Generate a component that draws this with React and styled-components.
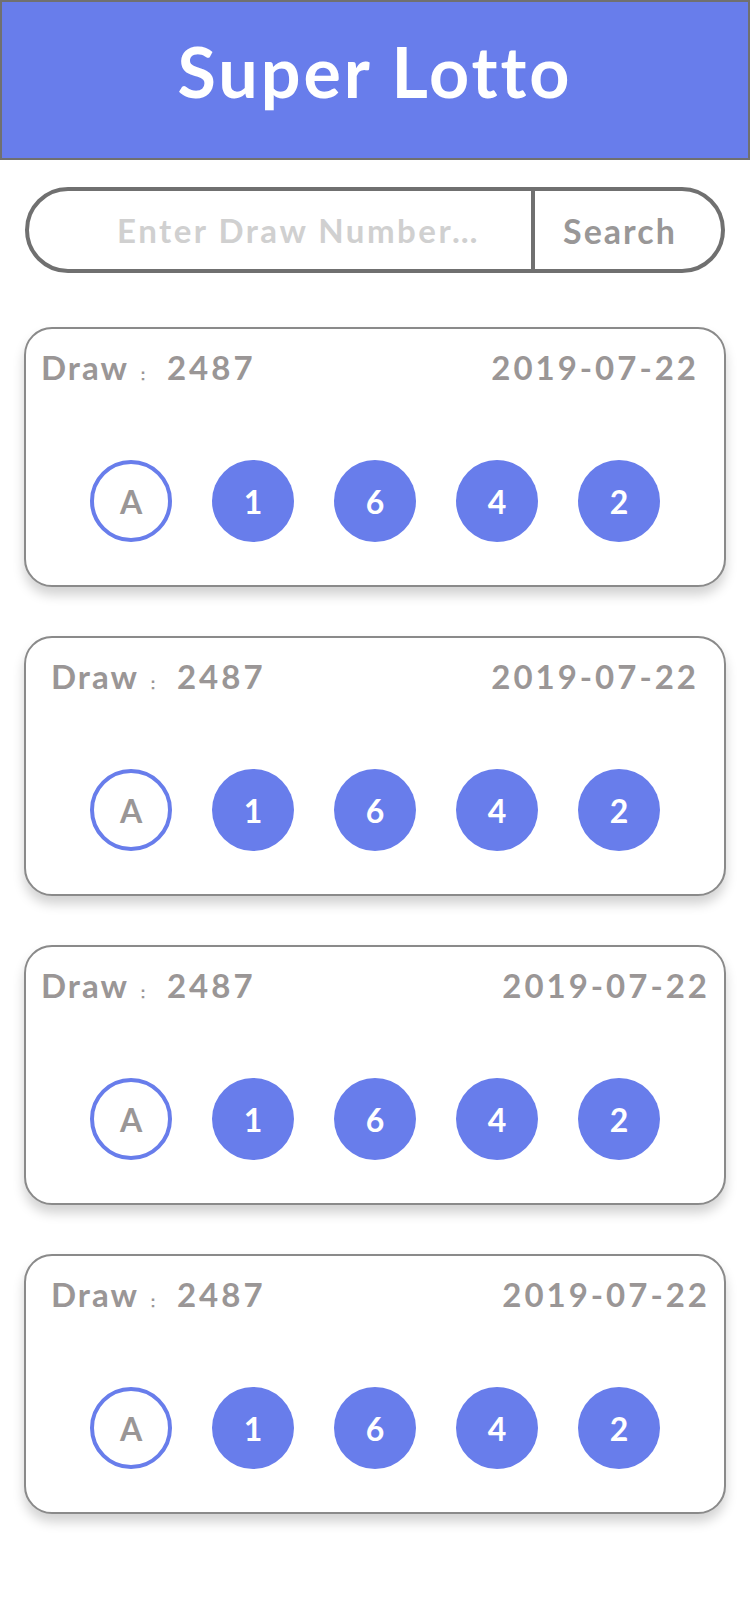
import React from 'react';
import styled, { createGlobalStyle } from 'styled-components';

const GlobalStyle = createGlobalStyle`
    html, body {
        margin: 0;
        padding: 0;
        background: #ffffff;
    }
    body {
        font-family: Lato, "Open Sans", "Liberation Sans", sans-serif;
    }
`;

const draws = [
    { id: 1, no: '2487', date: '2019-07-22', drawInset: 15, dateInset: 25 },
    { id: 2, no: '2487', date: '2019-07-22', drawInset: 25, dateInset: 25 },
    { id: 3, no: '2487', date: '2019-07-22', drawInset: 15, dateInset: 14 },
    { id: 4, no: '2487', date: '2019-07-22', drawInset: 25, dateInset: 14 },
];

const numbers = ['1', '6', '4', '2'];

const App = () => {
    return (
        <Wrapper>
            <GlobalStyle />
            <Header>Super Lotto</Header>

            <SearchBar>
                <SearchInput placeholder='Enter Draw Number…' />
                <SearchButton>Search</SearchButton>
            </SearchBar>

            <List>
                {draws.map((d) => (
                    <Card key={d.id}>
                        <CardTop $left={d.drawInset} $right={d.dateInset}>
                            <DrawInfo>
                                Draw<Colon>：</Colon><DrawNo>{d.no}</DrawNo>
                            </DrawInfo>
                            <DrawDate>{d.date}</DrawDate>
                        </CardTop>
                        <Balls>
                            <Ball $outline>A</Ball>
                            {numbers.map((n, i) => (
                                <Ball key={i}>{n}</Ball>
                            ))}
                        </Balls>
                    </Card>
                ))}
            </List>
        </Wrapper>
    );
};

export default App;

const Wrapper = styled.div`
    display: flex;
    flex-direction: column;
    align-items: center;
    width: 750px;
    min-height: 1624px;
    background: #ffffff;
`;

const Header = styled.div`
    display: flex;
    align-items: center;
    justify-content: center;
    box-sizing: border-box;
    width: 750px;
    height: 160px;
    padding-bottom: 18px;

    background: #687deb;
    border: 2px solid #707070;

    color: #ffffff;
    font-family: Lato, "Open Sans", sans-serif;
    font-size: 70px;
    font-weight: 700;
    letter-spacing: 3px;
`;

const SearchBar = styled.div`
    display: flex;
    box-sizing: border-box;
    width: 700px;
    height: 86px;
    margin-top: 27px;

    border: 4px solid #707070;
    border-radius: 43px;
    overflow: hidden;
    background: #ffffff;
`;

const SearchInput = styled.input`
    flex: 1;
    min-width: 0;
    border: none;
    outline: none;
    background: transparent;
    padding: 0 8px 0 45px;
    text-align: center;

    color: #555;
    font-family: Lato, "Open Sans", sans-serif;
    font-size: 33px;
    font-weight: 700;
    letter-spacing: 2.5px;

    &::placeholder {
        color: #d0d0d0;
    }
`;

const SearchButton = styled.div`
    display: flex;
    align-items: center;
    justify-content: center;
    width: 190px;
    padding-right: 16px;
    box-sizing: border-box;
    border-left: 4px solid #707070;

    color: #999797;
    font-size: 34px;
    font-weight: 700;
    letter-spacing: 2px;
`;

const List = styled.div`
    display: flex;
    flex-direction: column;
    gap: 49px;
    margin-top: 54px;
`;

const Card = styled.div`
    box-sizing: border-box;
    width: 702px;
    height: 260px;

    border: 2px solid #8a8a8a;
    border-radius: 28px;
    background: #ffffff;
    box-shadow: 0 8px 12px rgba(0, 0, 0, 0.18);
`;

const CardTop = styled.div`
    display: flex;
    justify-content: space-between;
    align-items: baseline;
    padding: 18px ${(p) => p.$right}px 0 ${(p) => p.$left}px;

    color: #9a9696;
    font-size: 33px;
    font-weight: 700;
    line-height: 40px;
`;

const DrawInfo = styled.div`
    display: flex;
    align-items: baseline;
    letter-spacing: 2px;
`;

const Colon = styled.span`
    font-size: 16px;
    letter-spacing: 0;
    margin: 0 16px 0 6px;
`;

const DrawNo = styled.span`
    letter-spacing: 3px;
`;

const DrawDate = styled.div`
    letter-spacing: 3px;
`;

const Balls = styled.div`
    display: flex;
    justify-content: center;
    gap: 40px;
    margin-top: 66px;
`;

const Ball = styled.div`
    display: flex;
    align-items: center;
    justify-content: center;
    box-sizing: border-box;
    width: 82px;
    height: 82px;
    border-radius: 50%;

    background: ${(p) => (p.$outline ? '#ffffff' : '#687deb')};
    border: ${(p) => (p.$outline ? '4px solid #687deb' : 'none')};
    color: ${(p) => (p.$outline ? '#9a9696' : '#ffffff')};

    font-size: 32px;
    font-weight: 700;
`;
